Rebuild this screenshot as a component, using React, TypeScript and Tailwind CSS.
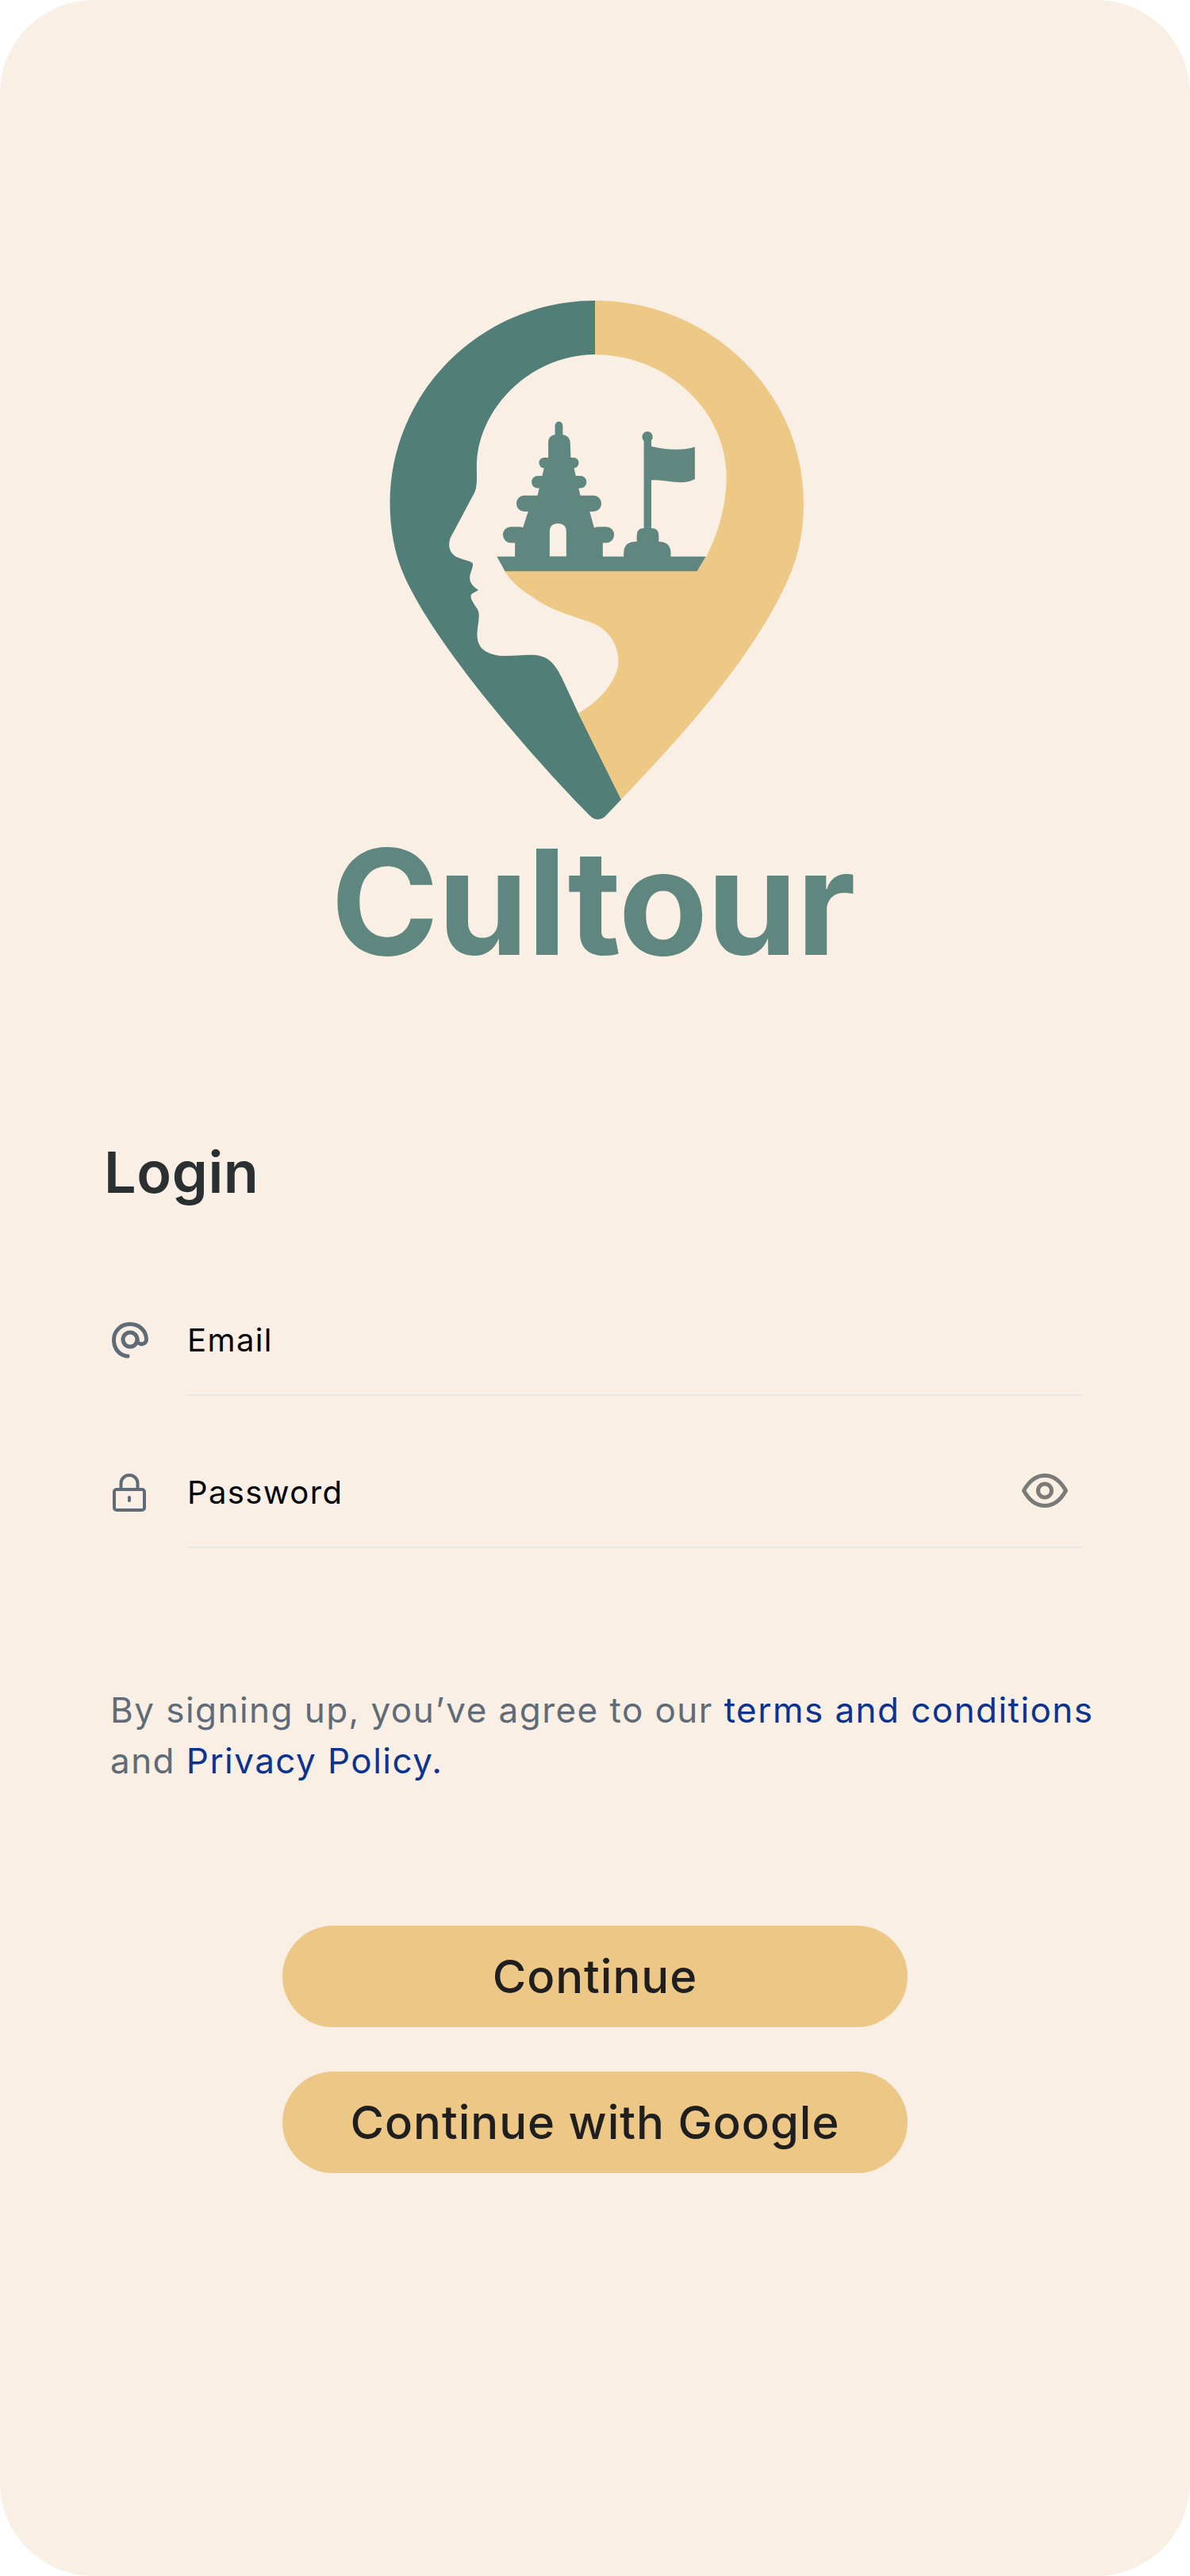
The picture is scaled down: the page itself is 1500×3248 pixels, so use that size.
const teal = "#527e78";
const tealLight = "#5f877f";
const sand = "#eec985";

function Logo() {
  return (
    <svg
      className="mx-auto block h-[720px] w-[700px]"
      viewBox="0 0 1568 1568"
      preserveAspectRatio="none"
    >
      <path
        fill={teal}
        d="M784 85 C466 85 205 335 205 640 C205 730 225 810 265 880 C350 1040 560 1290 768 1498 C780 1512 800 1514 814 1500 L858 1455 L737 1218 L690 1120 C670 1080 650 1060 610 1058 C570 1056 530 1066 495 1056 C460 1046 448 1025 452 990 C455 965 460 945 452 932 C440 915 428 900 436 890 L455 880 C440 870 428 860 431 840 C434 825 442 815 438 805 C420 795 385 795 375 770 C368 750 375 735 385 720 L445 610 C452 590 450 570 450 540 C450 385 600 233 784 233 Z"
      />
      <path
        fill={sand}
        d="M784 85 C1108 85 1373 335 1373 640 C1373 730 1355 800 1320 870 C1225 1065 1050 1260 858 1455 L737 1218 C790 1190 850 1130 850 1075 C850 1020 810 980 770 968 C700 945 650 930 610 900 C575 880 545 855 525 822 L1075 822 L1097 790 C1130 730 1155 650 1155 570 C1155 385 985 233 784 233 Z"
      />
      <g fill={tealLight}>
        <path d="M507 788 H1097 L1072 828 H530 Z" />
        {/* temple */}
        <rect x="671" y="417" width="22" height="50" rx="11" />
        <path d="M652 530 V475 Q652 452 682 452 Q712 452 714 475 L716 530 Z" />
        <rect x="626" y="516" width="112" height="29" rx="14" />
        <rect x="605" y="566" width="155" height="34" rx="17" />
        <rect x="562" y="620" width="240" height="44" rx="22" />
        <rect x="524" y="706" width="70" height="44" rx="22" />
        <rect x="770" y="706" width="68" height="44" rx="22" />
        <path d="M645 525 H720 L752 660 H612 Z" />
        <path d="M600 650 H765 L782 710 H806 V795 H558 V710 H580 Z" />
        {/* flag */}
        <rect x="922" y="460" width="21" height="260" />
        <circle cx="932" cy="459" r="15" />
        <path d="M943 485 C985 495 1030 498 1066 487 V575 C1030 595 985 575 943 578 Z" />
        <path d="M902 750 V730 Q902 710 922 710 H944 Q964 710 964 730 V750 Z" />
        <path d="M865 795 V780 Q865 747 898 747 H965 Q998 747 998 780 V795 Z" />
      </g>
      <path
        fill="#f9efe5"
        d="M656 787 V720 Q656 697 680 697 Q703 697 703 720 V787 Z"
      />
    </svg>
  );
}

function AtIcon() {
  return (
    <svg className="shrink-0" width="46" height="46" viewBox="0 0 46 46" fill="none" stroke="#5f6b76" strokeWidth="5" strokeLinecap="round">
      <path d="M20 43 C9 42 2.5 33 2.5 22.5 C2.5 11 11.5 2.5 23 2.5 C34.5 2.5 43.5 11 43.5 22 C43.5 28 34 30 32 24 V22" />
      <circle cx="23" cy="22" r="9" />
    </svg>
  );
}

function LockIcon() {
  return (
    <svg className="ml-px shrink-0" width="42" height="48" viewBox="0 0 42 48" fill="none" stroke="#5f6b76" strokeWidth="4">
      <rect x="2" y="20" width="38" height="26" rx="3" />
      <path d="M10.5 19 V12 A10.5 10 0 0 1 31.5 12 V19" />
      <rect x="19" y="28" width="4" height="8" rx="2" fill="#5f6b76" stroke="none" />
    </svg>
  );
}

function EyeIcon() {
  return (
    <svg className="mr-[18px] mb-[5px] shrink-0" width="58" height="43" viewBox="0 0 58 43" fill="none" stroke="#7a7a78" strokeWidth="5">
      <path d="M2.5 21.5 C10 8 20 2.5 29 2.5 C38 2.5 48 8 55.5 21.5 C48 35 38 40.5 29 40.5 C20 40.5 10 35 2.5 21.5 Z" />
      <circle cx="29" cy="21.5" r="8.5" />
    </svg>
  );
}

function Field({ icon, label, trailing }: { icon: React.ReactNode; label: string; trailing?: React.ReactNode }) {
  return (
    <div className="flex">
      <div className="flex h-10 w-[100px] shrink-0 items-center pl-[5px]">{icon}</div>
      <div className="flex-1 border-b-2 border-[#e8e6e6] pb-12">
        <div className="flex h-10 items-center justify-between">
          <span className="text-[40px] leading-10 tracking-[1.4px] text-black">{label}</span>
          {trailing}
        </div>
      </div>
    </div>
  );
}

export default function App() {
  return (
    <div className="h-[3248px] w-[1500px] rounded-[118px] bg-[#f9efe5] pt-[340px] font-['Inter',sans-serif]">
      <Logo />
      <p className="-mt-[15px] pr-[6px] text-center text-[184px] leading-none font-bold tracking-[-1.6px] text-[#5f877f]">
        Cultour
      </p>

      <h1 className="mt-[213px] ml-[131px] text-[72px] leading-none font-semibold tracking-[0.6px] text-[#2a3031]">
        Login
      </h1>

      <div className="mt-[156px] mr-[136px] ml-[136px] flex flex-col gap-[102px]">
        <Field icon={<AtIcon />} label="Email" />
        <Field icon={<LockIcon />} label="Password" trailing={<EyeIcon />} />
      </div>

      <p className="mt-[172px] ml-[139px] w-[1320px] text-[44px] leading-16 tracking-[1.45px] text-[#5f6b76]">
        By signing up, you’ve agree to our <span className="text-[#0b3390]">terms and conditions</span>
        <br />
        and <span className="text-[#0b3390]">Privacy Policy.</span>
      </p>

      <div className="mt-[176px] flex flex-col items-center gap-14">
        <button className="h-32 w-[788px] rounded-full bg-[#edc785] text-[58px] font-medium tracking-[1px] text-[#1f1f1f]">
          Continue
        </button>
        <button className="h-32 w-[788px] rounded-full bg-[#edc785] text-[58px] font-medium tracking-[1px] text-[#1f1f1f]">
          Continue with Google
        </button>
      </div>
    </div>
  );
}
